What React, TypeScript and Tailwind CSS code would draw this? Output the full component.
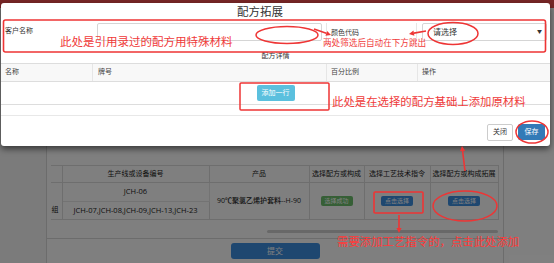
import React from 'react';

const RED = '#ee3535';

const Arrow: React.FC<{ x1: number; y1: number; x2: number; y2: number }> = ({ x1, y1, x2, y2 }) => {
  const a = Math.atan2(y2 - y1, x2 - x1);
  const len = 5;
  const w = 2.6;
  const bx = x2 - len * Math.cos(a);
  const by = y2 - len * Math.sin(a);
  const p1 = `${bx + w * Math.sin(a)},${by - w * Math.cos(a)}`;
  const p2 = `${bx - w * Math.sin(a)},${by + w * Math.cos(a)}`;
  return (
    <g>
      <line x1={x1} y1={y1} x2={bx} y2={by} stroke={RED} strokeWidth={1.6} />
      <polygon points={`${x2},${y2} ${p1} ${p2}`} fill={RED} />
    </g>
  );
};

const cols = 'grid grid-cols-[91px_234px_91px_133px]';

const App: React.FC = () => {
  return (
    <div className="relative w-[554px] h-[263px] overflow-hidden bg-white font-['Open_Sans','Noto_Sans_CJK_SC',sans-serif] text-[#333]">
      {/* page behind the dialog */}
      <div className="h-[8px] bg-[#f04c4c]" />
      <div className="flex h-[255px]">
        <div className="w-[47px] bg-[#f6f6f6] border-r border-[#d8d8d8]" />
        <div className="w-[457px] border-r border-[#d8d8d8] flex flex-col">
          <div className="pl-[4px] pr-[5px] pt-[157px]">
            <table className="table-fixed border-collapse w-[447px] text-[7px] text-[#222]">
              <colgroup>
                <col className="w-[11px]" />
                <col className="w-[147px]" />
                <col className="w-[100px]" />
                <col className="w-[55px]" />
                <col className="w-[66px]" />
                <col className="w-[68px]" />
              </colgroup>
              <thead>
                <tr className="h-[17px] border-t border-[#ddd]">
                  <th className="border-r border-[#ddd] font-normal" />
                  <th className="border-r border-[#ddd] font-normal">生产线或设备编号</th>
                  <th className="border-r border-[#ddd] font-normal">产品</th>
                  <th className="border-r border-[#ddd] font-normal">选择配方或构成</th>
                  <th className="border-r border-[#ddd] font-normal">选择工艺技术指令</th>
                  <th className="border-r border-[#ddd] font-normal">选择配方或构成拓展</th>
                </tr>
              </thead>
              <tbody>
                <tr className="h-[19px] border-t border-[#ddd]">
                  <td rowSpan={2} className="border-r border-b border-[#ddd] align-bottom pb-[4px] text-right pr-[3px] overflow-hidden whitespace-nowrap">组</td>
                  <td className="border-r border-b border-[#e6e6e6] text-center font-medium text-[7.5px]">JCH-06</td>
                  <td rowSpan={2} className="border-r border-b border-[#ddd] text-center font-medium whitespace-nowrap">90℃聚氯乙烯护套料--H-90</td>
                  <td rowSpan={2} className="border-r border-b border-[#ddd] text-center">
                    <span className="inline-block w-[32px] h-[10px] leading-[10px] rounded-[2px] bg-[#6cbf6c] text-white text-[6px]">选择成功</span>
                  </td>
                  <td rowSpan={2} className="border-r border-b border-[#ddd] text-center">
                    <span className="inline-block w-[32px] h-[10px] leading-[10px] rounded-[2px] bg-[#3d8fe0] text-white text-[6px]">点击选择</span>
                  </td>
                  <td rowSpan={2} className="border-r border-b border-[#ddd] text-center">
                    <span className="inline-block w-[32px] h-[10px] leading-[10px] rounded-[2px] bg-[#3d8fe0] text-white text-[6px]">点击选择</span>
                  </td>
                </tr>
                <tr className="h-[18px]">
                  <td className="border-r border-b border-[#ddd] text-center font-medium text-[7.5px] whitespace-nowrap">JCH-07,JCH-08,JCH-09,JCH-13,JCH-23</td>
                </tr>
              </tbody>
            </table>
            <div className="mt-[10px] h-[3px] flex">
              <div className="w-[217px]" />
              <div className="w-[232px] rounded-[2px] bg-[#d0d0d0]" />
            </div>
          </div>
          <div className="mt-[5px] border-t border-[#d8d8d8] flex justify-center pt-[4px]">
            <div className="w-[89px] h-[16px] rounded-[3px] bg-[#3d8fe0] text-white text-[8px] flex items-center justify-center">提交</div>
          </div>
        </div>
      </div>

      {/* backdrop */}
      <div className="absolute inset-0 bg-black/50" />

      {/* dialog */}
      <div className="absolute left-[1px] top-[3px] w-[549px] h-[143px] bg-white rounded-[3px] shadow-[0_3px_6px_rgba(0,0,0,0.55)] flex flex-col text-[7px]">
        <div className="h-[18px] flex items-center justify-center pr-[31px] text-[11.5px] text-[#333]">配方拓展</div>
        <div className={`${cols} mt-[2px] h-[18px]`}>
          <div className="flex items-start pt-[3px] pl-[4px]">客户名称</div>
          <div className="pl-[5px] pr-[4px]">
            <div className="h-full border border-[#d5d5d5] rounded-[2px]" />
          </div>
          <div className="border-x border-[#e6e6e6] flex items-center pl-[4px] pt-[2px]">颜色代码</div>
          <div className="pl-[5px] pr-[3px]">
            <div className="h-full border border-[#d5d5d5] rounded-[2px] flex items-center justify-between pl-[10px] pr-[4px]">
              <span className="text-[8px]">请选择</span>
              <span className="text-[5px]">▼</span>
            </div>
          </div>
        </div>
        <div className="h-[22px] flex items-end justify-center pb-[2px]">配方详情</div>
        <div className={`${cols} h-[19px] border-y border-[#ddd] bg-[#f8f8f8] text-[#444]`}>
          <div className="flex items-center pl-[4px]">名称</div>
          <div className="flex items-center pl-[5px] border-l border-[#e6e6e6]">牌号</div>
          <div className="flex items-center pl-[4px] border-l border-[#e6e6e6]">百分比例</div>
          <div className="flex items-center pl-[4px] border-l border-[#e6e6e6]">操作</div>
        </div>
        <div className="h-[23px] border-b border-[#ddd] flex items-center justify-center">
          <div className="w-[38px] h-[16px] rounded-[2px] bg-[#5bc0de] text-white flex items-center justify-center">添加一行</div>
        </div>
        <div className="h-[10px]" />
        <div className="flex-1 border-t border-[#e8e8e8] flex justify-end items-start gap-[5px] pt-[8px] pr-[5px]">
          <div className="w-[26px] h-[17px] border border-[#ccc] rounded-[2px] flex items-center justify-center">关闭</div>
          <div className="w-[27px] h-[16px] rounded-[2px] bg-[#337ab7] text-white flex items-center justify-center">保存</div>
        </div>
      </div>

      {/* annotations */}
      <svg className="absolute inset-0 pointer-events-none" width={554} height={263} viewBox="0 0 554 263" fill="none">
        <rect x={3.5} y={20} width={542} height={32} rx={2} stroke={RED} strokeWidth={1.6} />
        <ellipse cx={287} cy={35} rx={31} ry={8.5} stroke={RED} strokeWidth={1.5} />
        <Arrow x1={314} y1={29} x2={331} y2={35} />
        <ellipse cx={453} cy={33.5} rx={25} ry={11} stroke={RED} strokeWidth={1.5} />
        <Arrow x1={426} y1={31} x2={409} y2={34} />
        <rect x={240} y={83} width={89} height={27} rx={1} stroke={RED} strokeWidth={1.5} />
        <ellipse cx={532} cy={132} rx={16} ry={11} stroke={RED} strokeWidth={1.5} />
        <Arrow x1={465} y1={171} x2={462} y2={146} />
        <ellipse cx={465} cy={206} rx={32} ry={15} stroke={RED} strokeWidth={1.5} />
        <rect x={374} y={192} width={49} height={21} rx={1} stroke={RED} strokeWidth={1.6} />
        <Arrow x1={399} y1={215} x2={399} y2={233} />
      </svg>
      <span className="absolute left-[60px] top-[36px] text-[11.5px] leading-none text-[#f03a3a] whitespace-nowrap">此处是引用录过的配方用特殊材料</span>
      <span className="absolute left-[323px] top-[39px] text-[8.6px] leading-none text-[#f03a3a] whitespace-nowrap">两处筛选后自动在下方跳出</span>
      <span className="absolute left-[332px] top-[96px] text-[11.4px] leading-none text-[#f03a3a] whitespace-nowrap">此处是在选择的配方基础上添加原材料</span>
      <span className="absolute left-[337px] top-[236px] text-[11.4px] leading-none text-[#ff3a3a] whitespace-nowrap">需要添加工艺指令的，点击此处添加</span>
    </div>
  );
};

export default App;
